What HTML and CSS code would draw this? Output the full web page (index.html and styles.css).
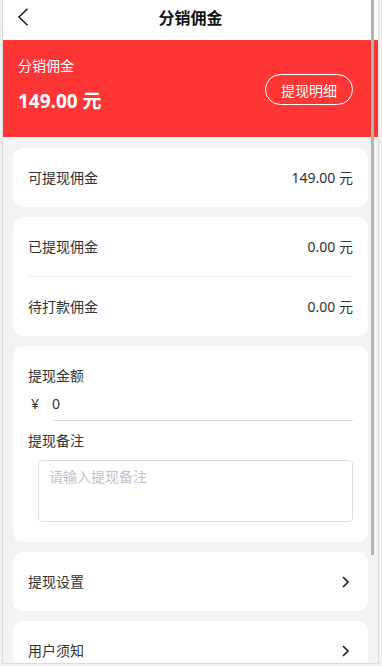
FILE: index.html
```html
<!DOCTYPE html>
<html lang="zh-CN">
<head>
<meta charset="utf-8">
<title>分销佣金</title>
<link rel="stylesheet" href="styles.css">
</head>
<body>
<div class="frame">
  <div class="page">
    <header class="nav">
      <svg class="nav-back" width="12" height="18" viewBox="0 0 12 18"><path d="M10.5 0.8 L2 9 L10.5 17.2" fill="none" stroke="#111" stroke-width="1.4"/></svg>
      <h1 class="nav-title">分销佣金</h1>
    </header>
    <section class="banner">
      <div class="banner-info">
        <div class="banner-label">分销佣金</div>
        <div class="banner-amount">149.00 元</div>
      </div>
      <button class="banner-btn">提现明细</button>
    </section>
    <main class="list">
      <div class="card">
        <div class="row"><span>可提现佣金</span><span>149.00 元</span></div>
      </div>
      <div class="card">
        <div class="row"><span>已提现佣金</span><span>0.00 元</span></div>
        <div class="divider"></div>
        <div class="row"><span>待打款佣金</span><span>0.00 元</span></div>
      </div>
      <div class="card form">
        <div class="form-label">提现金额</div>
        <div class="amount-row">
          <span class="currency">¥</span>
          <span class="amount-input">0</span>
        </div>
        <div class="form-label remark-label">提现备注</div>
        <div class="textarea">请输入提现备注</div>
      </div>
      <div class="card">
        <div class="row"><span>提现设置</span>
          <svg class="chev" width="7" height="12" viewBox="0 0 7 12"><path d="M1 1 L6 6 L1 11" fill="none" stroke="#222" stroke-width="1.6"/></svg>
        </div>
      </div>
      <div class="card">
        <div class="row"><span>用户须知</span>
          <svg class="chev" width="7" height="12" viewBox="0 0 7 12"><path d="M1 1 L6 6 L1 11" fill="none" stroke="#222" stroke-width="1.6"/></svg>
        </div>
      </div>
    </main>
  </div>
  <div class="scroll-thumb"></div>
</div>
</body>
</html>
```
FILE: styles.css
```css
* { box-sizing: border-box; }
html, body { margin: 0; padding: 0; }
body {
  background: #f0f0f0;
  font-family: "Noto Sans", "Noto Sans CJK SC", sans-serif;
  color: #333;
  font-size: 14px;
}
.frame {
  position: relative;
  margin-left: 2px;
  width: 377px;
  height: 664px;
  border-left: 1px solid #dcdcdc;
  border-right: 1px solid #dcdcdc;
  border-bottom: 1px solid #dcdcdc;
  overflow: hidden;
}
.page {
  width: 375px;
  background: #f2f3f5;
  min-height: 100%;
}
.nav {
  height: 40px;
  background: #fff;
  display: flex;
  align-items: center;
  justify-content: center;
  position: relative;
}
.nav-back {
  position: absolute;
  left: 14px;
  top: 8px;
}
.nav-title {
  margin: 0;
  font-size: 16px;
  font-weight: 700;
  color: #111;
  line-height: 20px;
  margin-top: -4px;
}
.banner {
  height: 97px;
  background: #ff3636;
  display: flex;
  align-items: flex-start;
  justify-content: space-between;
  padding: 16px 25px 0 15px;
  color: #fff;
}
.banner-info {
  display: flex;
  flex-direction: column;
}
.banner-label {
  font-size: 14px;
  line-height: 20px;
}
.banner-amount {
  font-size: 19px;
  font-weight: 700;
  line-height: 24px;
  margin-top: 13px;
}
.banner-btn {
  width: 88px;
  height: 31px;
  border: 1px solid #fff;
  border-radius: 16px;
  background: transparent;
  color: #fff;
  font-family: inherit;
  font-size: 14px;
  padding: 0;
  margin-top: 18px;
}
.list {
  padding: 11px 10px 10px;
  display: flex;
  flex-direction: column;
  gap: 10px;
}
.card {
  background: #fff;
  border-radius: 10px;
  padding: 0 15px;
}
.row {
  height: 59px;
  display: flex;
  align-items: center;
  justify-content: space-between;
  line-height: 20px;
}
.divider {
  height: 1px;
  background: #f0f1f3;
}
.chev { margin-right: 4px; }
.form { padding: 20px 15px; }
.form-label { line-height: 20px; }
.amount-row {
  display: flex;
  align-items: stretch;
  height: 35px;
}
.currency {
  width: 24px;
  display: flex;
  align-items: center;
  padding-left: 3px;
  padding-bottom: 1px;
}
.amount-input {
  flex: 1;
  display: flex;
  align-items: center;
  border-bottom: 1px solid #dcdfe6;
}
.remark-label { margin-top: 10px; }
.textarea {
  margin: 9px 0 0 10px;
  height: 62px;
  border: 1px solid #dcdfe6;
  border-radius: 4px;
  padding: 6px 10px;
  color: #c0c4cc;
  line-height: 20px;
}
.scroll-thumb {
  position: absolute;
  left: 368px;
  top: 0;
  width: 3px;
  height: 555px;
  background: #b3b3b3;
}
```
